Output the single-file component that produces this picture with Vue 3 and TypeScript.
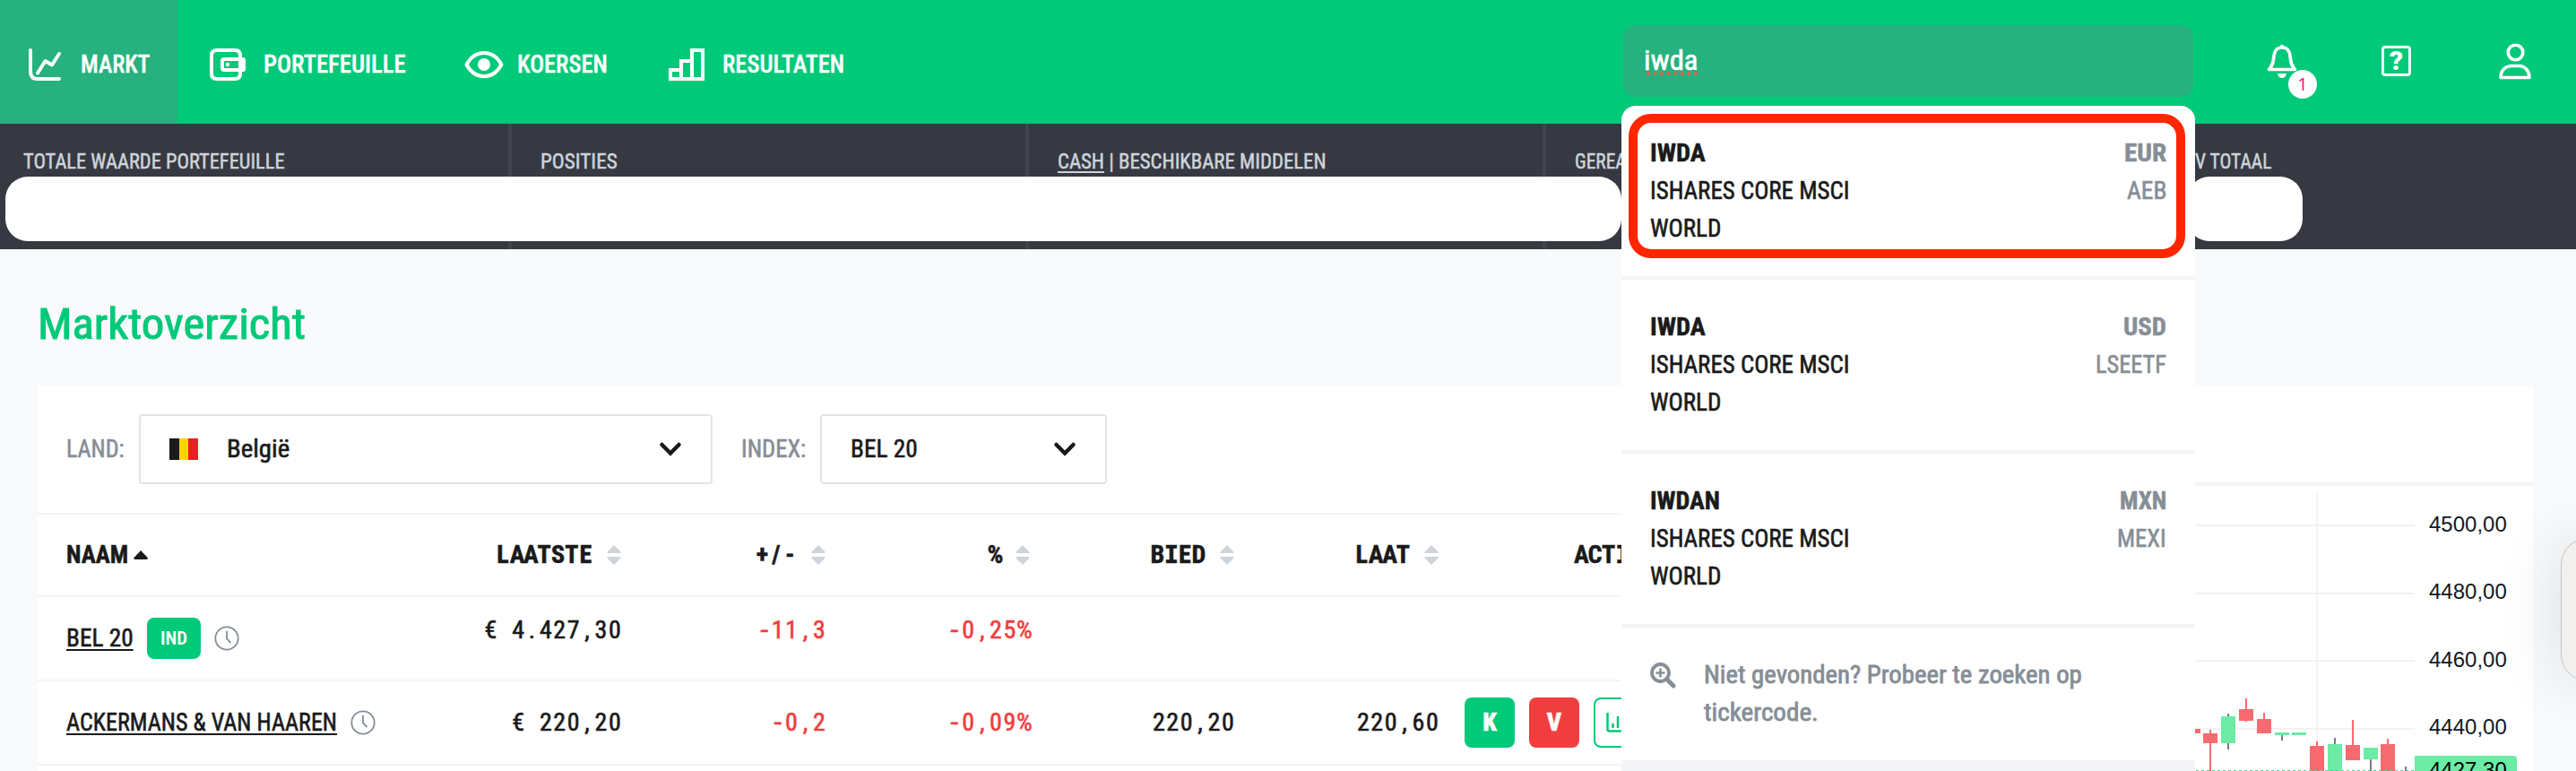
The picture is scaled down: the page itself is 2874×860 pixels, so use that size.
<script setup lang="ts">
import type { Directive } from 'vue'

interface Tab { id: string; label: string; width: number }
interface Result { code: string; codeWidth: number; currency: string; currencyWidth: number; exchange: string; exchangeWidth: number }
interface Column { label: string; sortable: boolean }
interface Row { name: string; width: number; badge: string; values: string[]; actions: boolean }
interface Candle { x: number; top: number; bottom: number; high: number; low: number; up: boolean; width?: number }

/* Sets a piece of text to a fixed advance width by condensing its glyphs. */
const vFit: Directive<HTMLElement, number> = {
  mounted(el, { value }) {
    const natural = el.offsetWidth
    if (!natural) return
    el.style.transform = `scaleX(${value / natural})`
    el.style.marginRight = `${value - natural}px`
  },
}

const tabs: Tab[] = [
  { id: 'markt', label: 'MARKT', width: 77 },
  { id: 'portefeuille', label: 'PORTEFEUILLE', width: 159 },
  { id: 'koersen', label: 'KOERSEN', width: 101 },
  { id: 'resultaten', label: 'RESULTATEN', width: 136 },
]

const results: Result[] = [
  { code: 'IWDA', codeWidth: 62, currency: 'EUR', currencyWidth: 47, exchange: 'AEB', exchangeWidth: 44 },
  { code: 'IWDA', codeWidth: 62, currency: 'USD', currencyWidth: 48, exchange: 'LSEETF', exchangeWidth: 79 },
  { code: 'IWDAN', codeWidth: 78, currency: 'MXN', currencyWidth: 52, exchange: 'MEXI', exchangeWidth: 55 },
]

const columns: Column[] = [
  { label: 'LAATSTE', sortable: true },
  { label: '+/-', sortable: true },
  { label: '%', sortable: true },
  { label: 'BIED', sortable: true },
  { label: 'LAAT', sortable: true },
]

const rows: Row[] = [
  { name: 'BEL 20', width: 75, badge: 'IND', values: ['€ 4.427,30', '-11,3', '-0,25%', '', ''], actions: false },
  { name: 'ACKERMANS & VAN HAAREN', width: 302, badge: '', values: ['€ 220,20', '-0,2', '-0,09%', '220,20', '220,60'], actions: true },
]

const prices: string[] = ['4500,00', '4480,00', '4460,00', '4440,00']
const gridLines: number[] = [43, 119, 194, 270]

const candles: Candle[] = [
  { x: 0, top: 271, bottom: 276, high: 271, low: 276, up: false, width: 6 },
  { x: 9, top: 276, bottom: 287, high: 272, low: 318, up: false },
  { x: 29, top: 257, bottom: 287, high: 254, low: 294, up: true },
  { x: 49, top: 249, bottom: 262, high: 237, low: 263, up: false },
  { x: 69, top: 260, bottom: 276, high: 253, low: 276, up: false },
  { x: 89, top: 275, bottom: 278, high: 275, low: 284, up: true },
  { x: 108, top: 275, bottom: 278, high: 275, low: 278, up: true },
  { x: 128, top: 290, bottom: 318, high: 285, low: 318, up: false },
  { x: 148, top: 288, bottom: 318, high: 281, low: 318, up: true },
  { x: 168, top: 289, bottom: 306, high: 261, low: 306, up: false },
  { x: 188, top: 292, bottom: 305, high: 292, low: 318, up: true },
  { x: 207, top: 288, bottom: 318, high: 282, low: 318, up: false },
  { x: 227, top: 318, bottom: 318, high: 313, low: 318, up: true },
]
</script>

<template>
  <div class="app">
    <header class="topbar">
      <nav class="tabs">
        <a v-for="tab in tabs" :key="tab.id" class="tab" :class="[tab.id, { active: tab.id === 'markt' }]">
          <svg v-if="tab.id === 'markt'" class="tab-icon" viewBox="0 0 48 44">
            <path d="M8 6V30q0 8 8 8H40M16 31.500L24.500 18L32 22.500L40 10" fill="none" stroke="#fff" stroke-width="4" stroke-linecap="round" stroke-linejoin="round" />
          </svg>
          <svg v-else-if="tab.id === 'portefeuille'" class="tab-icon" viewBox="0 0 48 44">
            <path d="M38 16V12q0-6-6-6H12q-6 0-6 6V32q0 6 6 6H32q6 0 6-6V28" fill="none" stroke="#fff" stroke-width="4" />
            <path d="M42 16H20q-2 0-2 2V26q0 2 2 2H42" fill="none" stroke="#fff" stroke-width="4" />
            <rect x="36" y="14" width="8" height="16" rx="3" fill="#fff" />
            <circle cx="24" cy="22" r="2.200" fill="#fff" />
          </svg>
          <svg v-else-if="tab.id === 'koersen'" class="tab-icon" viewBox="0 0 48 44">
            <path d="M4.500 22C14 4.500 34 4.500 43.500 22C34 39.500 14 39.500 4.500 22Z" fill="none" stroke="#fff" stroke-width="4" stroke-linejoin="round" />
            <circle cx="24" cy="22" r="7" fill="#fff" />
          </svg>
          <svg v-else class="tab-icon" viewBox="0 0 48 44">
            <path d="M6 38V28H18V38M18 38V18H30V38M30 38V6H42V38M4 38H44" fill="none" stroke="#fff" stroke-width="4" />
          </svg>
          <span class="tab-label"><span v-fit="tab.width" class="fit">{{ tab.label }}</span></span>
        </a>
      </nav>
      <div class="search"><span v-fit="61" class="fit">iwda</span><i class="spelling"></i></div>
      <div class="tools">
        <div class="bell">
          <svg width="34" height="40" viewBox="0 0 34 40">
            <path d="M17 4C9 4 8 11 7.500 17C7 24 5 25 2.500 28.500H31.500C29 25 27 24 26.500 17C26 11 25 4 17 4Z" fill="none" stroke="#fff" stroke-width="3.600" stroke-linejoin="round" />
            <circle cx="17" cy="3" r="2.200" fill="#fff" />
            <path d="M12 33H22Q21 38 17 38T12 33Z" fill="#fff" />
          </svg>
          <span class="count">1</span>
        </div>
        <div class="help">?</div>
        <svg class="user" width="36" height="41" viewBox="0 0 36 41">
          <circle cx="18.500" cy="10.500" r="8.300" fill="none" stroke="#fff" stroke-width="3.600" />
          <path d="M2 38.500C2 30 8 25.500 14 25.500H22.500C29 25.500 34 31 34 38.500Z" fill="none" stroke="#fff" stroke-width="3.600" stroke-linejoin="round" />
        </svg>
      </div>
    </header>

    <section class="summary">
      <div class="metric"><span v-fit="292" class="fit">TOTALE WAARDE PORTEFEUILLE</span></div>
      <div class="metric"><span v-fit="86" class="fit">POSITIES</span></div>
      <div class="metric"><span v-fit="300" class="fit"><u>CASH</u> | BESCHIKBARE MIDDELEN</span></div>
      <div class="metric"><span v-fit="58" class="fit">GEREA</span></div>
      <div class="metric total"><span v-fit="85" class="fit">V TOTAAL</span></div>
      <div class="mask wide"></div>
      <div class="mask small"></div>
    </section>

    <main>
      <h1><span v-fit="299" class="fit">Marktoverzicht</span></h1>
      <div class="panels">
        <section class="market">
          <div class="filters">
            <span class="filter-label"><span v-fit="65" class="fit">LAND:</span></span>
            <div class="select country">
              <span class="flag"><i></i><i></i><i></i></span>
              <span v-fit="70" class="fit">België</span>
              <svg class="chevron" width="26" height="18" viewBox="0 0 26 18"><path d="M3.500 4L13 13.500L22.500 4" fill="none" stroke="#1a1a1a" stroke-width="4.500" stroke-linecap="round" /></svg>
            </div>
            <span class="filter-label index"><span v-fit="72" class="fit">INDEX:</span></span>
            <div class="select">
              <span v-fit="75" class="fit">BEL 20</span>
              <svg class="chevron" width="26" height="18" viewBox="0 0 26 18"><path d="M3.500 4L13 13.500L22.500 4" fill="none" stroke="#1a1a1a" stroke-width="4.500" stroke-linecap="round" /></svg>
            </div>
          </div>
          <div class="row head">
            <div class="name"><span v-fit="69" class="fit">NAAM</span><i class="ascending"></i></div>
            <div v-for="col in columns" :key="col.label" class="cell">
              <span class="mono"><span v-for="(c, i) in col.label" :key="i" :class="{ slab: c === 'I' }">{{ c }}</span></span>
              <svg class="sort" width="16" height="22" viewBox="0 0 16 22"><path d="M8 0L15.500 7.500Q16 9 14.500 9H1.500Q0 9 .5 7.500ZM8 22L15.500 14.500Q16 13 14.500 13H1.500Q0 13 .5 14.500Z" fill="#ced4da" /></svg>
            </div>
            <div class="cell action-head"><span class="mono"><span v-for="(c, i) in 'ACTI'" :key="i" :class="{ slab: c === 'I' }">{{ c }}</span></span></div>
          </div>
          <div v-for="row in rows" :key="row.name" class="row" :class="{ raised: !row.actions }">
            <div class="name">
              <span v-fit="row.width" class="fit link">{{ row.name }}</span>
              <span v-if="row.badge" class="badge"><span v-fit="30" class="fit">{{ row.badge }}</span></span>
              <svg class="clock" width="28" height="28" viewBox="0 0 28 28"><circle cx="14" cy="14" r="12.700" fill="none" stroke="#868e96" stroke-width="1.800" /><path d="M14 6.500V14.500L18 18.500" fill="none" stroke="#868e96" stroke-width="1.800" stroke-linecap="round" /></svg>
            </div>
            <div v-for="(value, v) in row.values" :key="v" class="cell value" :class="{ down: v === 1 || v === 2 }">
              <span class="mono"><span v-for="(c, i) in value" :key="i" :class="{ dash: c === '-' }">{{ c }}</span></span>
            </div>
            <div v-if="row.actions" class="actions">
              <button class="buy">K</button>
              <button class="sell">V</button>
              <button class="graph">
                <svg width="30" height="22" viewBox="0 0 30 22"><path d="M1.500 0V18.500Q1.500 20.500 3.500 20.500H30M7.500 17V12M13 17V4M18.500 17V9M24 17V2" fill="none" stroke="#00c979" stroke-width="2.500" /></svg>
              </button>
            </div>
          </div>
        </section>

        <section class="chart">
          <div class="chart-head"></div>
          <div class="chart-body">
            <svg class="plot" width="245" height="318" viewBox="0 0 245 318" shape-rendering="crispEdges">
              <g fill="#f2f2f2">
                <rect v-for="y in gridLines" :key="y" x="0" :y="y" width="245" height="2" />
                <rect x="135" y="8" width="2" height="310" />
              </g>
              <g v-for="(k, i) in candles" :key="i">
                <rect v-if="!k.width" :x="k.x + 7" :y="k.high" width="2" :height="k.low - k.high" :fill="k.up ? '#787b86' : '#f76b70'" />
                <rect :x="k.x" :y="k.top" :width="k.width ?? 16" :height="k.bottom - k.top" :fill="k.up ? '#6beba4' : '#f76b70'" />
              </g>
              <path d="M1 317.500H245" stroke="#48d597" stroke-dasharray="3 3" />
            </svg>
            <div class="axis">
              <span v-for="p in prices" :key="p" class="price">{{ p }}</span>
              <span class="last">4427,30</span>
            </div>
          </div>
        </section>
      </div>
    </main>

    <aside class="dropdown">
      <div v-for="(r, i) in results" :key="i" class="result">
        <div>
          <strong><span v-fit="r.codeWidth" class="fit">{{ r.code }}</span></strong>
          <p><span v-fit="222" class="fit">ISHARES CORE MSCI</span></p>
          <p><span v-fit="79" class="fit">WORLD</span></p>
        </div>
        <div class="market-code">
          <strong><span v-fit="r.currencyWidth" class="fit">{{ r.currency }}</span></strong>
          <p><span v-fit="r.exchangeWidth" class="fit">{{ r.exchange }}</span></p>
        </div>
      </div>
      <div class="hint">
        <svg width="29" height="29" viewBox="0 0 29 29" fill="none" stroke="#868e96"><circle cx="11.500" cy="11.500" r="9.500" stroke-width="3.800" /><path d="M18.500 18.500L26 26" stroke-width="5" stroke-linecap="round" /><path d="M11.500 6.500V16.500M6.500 11.500H16.500" stroke-width="2.600" /></svg>
        <div>
          <p><span v-fit="422" class="fit">Niet gevonden? Probeer te zoeken op</span></p>
          <p><span v-fit="128" class="fit">tickercode.</span></p>
        </div>
      </div>
      <div class="more"></div>
      <div class="highlight"></div>
    </aside>

    <div class="side-widget"></div>
  </div>
</template>

<style>
body { margin: 0; background: #f9fafc; }
</style>

<style scoped>
.app { position: relative; width: 2874px; height: 860px; overflow: hidden; background: #f9fafc; color: #1a1a1a; font-family: Roboto, "Open Sans", sans-serif; font-stretch: 75%; font-size: 28px; font-weight: 400; line-height: 42px; -webkit-text-stroke: .6px currentColor; }
.fit { display: inline-block; white-space: nowrap; transform-origin: left center; flex: none; }
p, h1 { margin: 0; }

.topbar { display: flex; height: 138px; background: #00c979; color: #fff; }
.tabs { display: flex; width: 1811px; }
.tab { display: flex; align-items: center; box-sizing: border-box; height: 138px; padding: 4px 30px 0 32px; font-weight: 500; -webkit-text-stroke-width: .4px; }
.tab.active { width: 198px; padding-left: 26px; background: #26b17f; }
.tab-icon { width: 48px; height: 44px; margin: 2px 15.500px 0 0; }
.tab-label { display: flex; margin-top: 1px; }
.koersen { padding-left: 34px; }
.koersen .tab-icon { margin-right: 13px; }
.resultaten { padding-left: 34.500px; }
.search { position: relative; box-sizing: border-box; width: 636px; height: 80px; margin-top: 28px; padding: 19px 0 0 23px; border-radius: 14px; background: #26b17f; font-size: 31px; }
.spelling { position: absolute; left: 24px; top: 52px; width: 60px; height: 4px; background: radial-gradient(circle, #e0644a 1.800px, transparent 2.200px) 0 0 / 7.600px 4px; }
.tools { display: flex; align-items: flex-start; padding-left: 82px; -webkit-text-stroke-width: 0; }
.bell { position: relative; width: 34px; height: 40px; margin-top: 49px; }
.bell svg, .user { display: block; }
.count { position: absolute; left: 24px; top: 29px; width: 32px; height: 32px; border-radius: 50%; background: #fff; color: #f0107c; font: 500 20px/32px "Open Sans", sans-serif; text-align: center; }
.help { box-sizing: border-box; width: 33px; height: 34px; margin: 51px 98px 0 94px; border: 3.500px solid #fff; border-radius: 4px; font: 900 30px/27px Roboto, sans-serif; text-align: center; }
.user { margin-top: 48px; }

.summary { position: relative; display: grid; grid-template-columns: 571px 577px 577px 577px 572px; height: 140px; background: #363942; color: #ced4da; font-size: 24px; line-height: 30px; -webkit-text-stroke-width: .5px; }
.metric { box-sizing: border-box; padding: 27px 0 0 31.500px; border-right: 4px solid #40444d; }
.metric:first-child { padding-left: 25.500px; }
.metric.total { padding-left: 147px; border: 0; }
.metric u { text-decoration-thickness: 2px; text-underline-offset: 3px; }
.mask { position: absolute; top: 59px; height: 72px; border-radius: 25px; background: #fff; }
.mask.wide { left: 6px; width: 1803px; }
.mask.small { left: 2440px; width: 129px; }

h1 { padding: 54px 0 38px 42px; color: #00c979; font-size: 48px; font-weight: 400; line-height: 60px; -webkit-text-stroke-width: 1px; }
.panels { display: flex; gap: 60px; padding: 0 48px 0 42px; }
.market { width: 1840px; height: 430px; background: #fff; }
.filters { display: flex; align-items: center; height: 142px; padding-left: 32px; border-bottom: 2px solid #f3f4f6; }
.filter-label { width: 81px; color: #868e96; }
.filter-label.index { width: 88px; margin-left: 32px; }
.select { display: flex; align-items: center; box-sizing: border-box; width: 320px; height: 78px; padding: 0 32px; border: 2px solid #e1e5e9; border-radius: 4px; }
.select.country { width: 640px; }
.flag { display: flex; width: 32px; height: 24px; margin-right: 32px; }
.flag i { flex: 1; background: #1a1a1a; }
.flag i:nth-child(2) { background: #fdd20a; }
.flag i:nth-child(3) { background: #ee1c25; }
.chevron { margin-left: auto; }
.row { display: grid; grid-template-columns: 424px repeat(5, 228px) auto; align-items: center; height: 92px; border-bottom: 2px solid #f3f4f6; }
.row.head { height: 90px; font-weight: 700; -webkit-text-stroke-width: .5px; }
.name { display: flex; align-items: center; padding-left: 32px; }
.ascending { width: 16px; height: 10px; margin-left: 6px; background: #1a1a1a; clip-path: polygon(50% 0, 100% 85%, 94% 100%, 6% 100%, 0 85%); }
.cell { display: flex; align-items: center; justify-content: flex-end; }
.cell.value { padding-right: .5px; }
.raised .cell { margin-top: -19px; }
.sort { margin: 0 1px 0 16px; }
.mono { display: flex; }
.mono span { width: 15.400px; text-align: center; white-space: pre; }
.mono .slab { font-family: "DejaVu Sans Mono", monospace; font-size: 27px; }
.mono .dash { transform: scaleX(1.3); }
.action-head { justify-content: flex-start; padding-left: 150px; }
.down { color: #f03e3e; }
.link { text-decoration: underline; text-decoration-thickness: 2px; text-underline-offset: 3px; }
.badge { display: flex; justify-content: center; width: 60px; height: 46px; margin-left: 15px; border-radius: 8px; background: #00c979; color: #fff; font-size: 20px; font-weight: 600; line-height: 46px; -webkit-text-stroke-width: 0; }
.clock { margin-left: 15px; }
.actions { display: flex; gap: 16px; padding-left: 28px; }
.actions button { box-sizing: border-box; width: 56px; height: 56px; padding: 0; border: 0; border-radius: 8px; color: #fff; font: 800 28px/54px Roboto, sans-serif; font-stretch: 75%; }
.buy { background: #00c979; }
.sell { background: #f03e3e; }
.actions .graph { border: 2px solid #00c979; background: #fff; }
.graph svg { display: block; margin-left: 12px; }

.chart { flex: 1; height: 430px; background: #fff; }
.chart-head { height: 108px; border-bottom: 4px solid #f3f4f6; }
.chart-body { display: flex; justify-content: flex-end; padding-right: 18px; }
.plot { display: block; }
.axis { width: 114px; height: 318px; overflow: hidden; color: #131722; font: 24px/28px "Liberation Sans", Arial, sans-serif; -webkit-text-stroke-width: 0; }
.price { display: block; height: 28px; margin: 0 0 47.400px 16px; }
.price:first-child { margin-top: 29px; }
.last { display: block; height: 32px; margin-top: -30px; padding-left: 16px; border-radius: 0 4px 0 0; background: #6beba4; color: #000; line-height: 31px; }

.dropdown { position: absolute; left: 1809px; top: 118px; width: 640px; height: 742px; overflow: hidden; border-radius: 16px 16px 0 0; background: #fff; }
.result { display: flex; justify-content: space-between; box-sizing: border-box; height: 194px; padding: 32px 32px 0; border-bottom: 4px solid #f3f4f6; }
.result strong { display: block; font-weight: 700; -webkit-text-stroke-width: .5px; }
.market-code { color: #868e96; text-align: right; }
.hint { display: flex; align-items: flex-start; box-sizing: border-box; height: 148px; padding: 32px 0 0 32px; color: #868e96; -webkit-text-stroke-width: .8px; }
.hint svg { margin: 7px 31px 0 0; }
.more { height: 12px; background: #f3f4f6; }
.highlight { position: absolute; left: 8px; top: 9px; box-sizing: border-box; width: 621px; height: 161px; border: 10px solid #ff2600; border-radius: 25px; }
.side-widget { position: absolute; left: 2857px; top: 600px; box-sizing: border-box; width: 60px; height: 160px; border: 1px solid #c4c4c4; border-radius: 30px; background: #f2f1ef; box-shadow: 0 2px 70px rgba(0, 0, 0, .13); }
</style>
